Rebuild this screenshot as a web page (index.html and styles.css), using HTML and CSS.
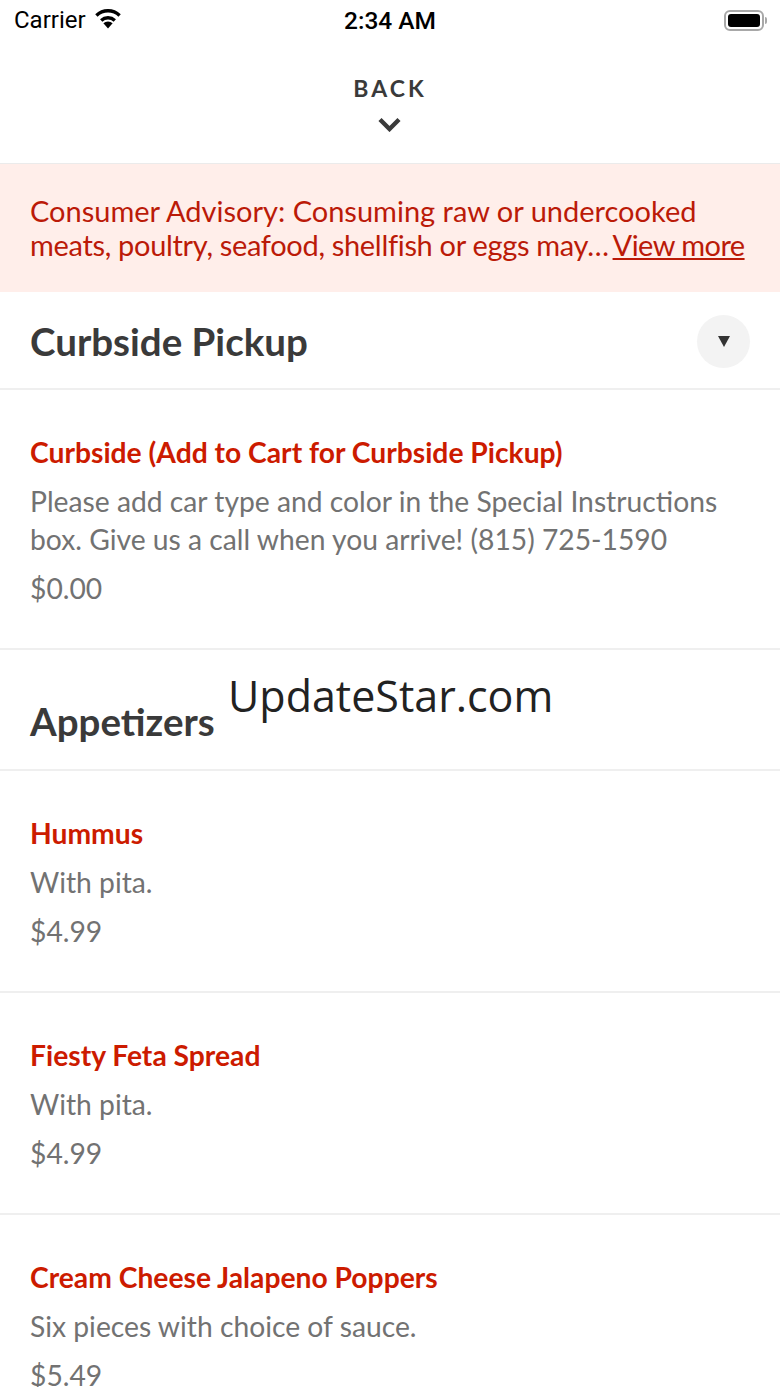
FILE: index.html
```html
<!DOCTYPE html>
<html lang="en">
<head>
  <meta charset="UTF-8">
  <meta name="viewport" content="width=device-width, initial-scale=1.0">
  <title>Menu</title>
  <link rel="stylesheet" href="styles.css">
</head>
<body>
  <div class="status-bar">
    <div class="status-left">
      <span>Carrier</span>
      <svg class="wifi-icon" width="28" height="21" viewBox="0 0 28 21">
        <path d="M14 20.5l-4.6-5.2a6.6 6.6 0 0 1 9.2 0z" fill="#000"/>
        <path d="M7.2 12.4a10 10 0 0 1 13.6 0" fill="none" stroke="#000" stroke-width="3.4"/>
        <path d="M2.4 7.4a16.8 16.8 0 0 1 23.2 0" fill="none" stroke="#000" stroke-width="3.4"/>
      </svg>
    </div>
    <div class="status-time">2:34 AM</div>
    <div class="battery">
      <div class="battery-body"><div class="battery-fill"></div></div>
      <div class="battery-tip"></div>
    </div>
  </div>

  <div class="back-bar">
    <div class="back-text">BACK</div>
    <svg class="back-chevron" width="23" height="15" viewBox="0 0 23 15">
      <path d="M2 2.5L11.5 12L21 2.5" fill="none" stroke="#3a3a3a" stroke-width="4.4"/>
    </svg>
  </div>

  <div class="advisory">
    <div class="advisory-line">Consumer Advisory: Consuming raw or undercooked</div>
    <div class="advisory-line tight">meats, poultry, seafood, shellfish or eggs may…<a href="#" class="advisory-link">View more</a></div>
  </div>

  <div class="section-header first-section">
    <h2>Curbside Pickup</h2>
    <div class="section-toggle"><div class="toggle-arrow"></div></div>
  </div>

  <div class="menu-item">
    <h3>Curbside (Add to Cart for Curbside Pickup)</h3>
    <p>Please add car type and color in the Special Instructions box. Give us a call when you arrive! (815) 725-1590</p>
    <p class="price">$0.00</p>
  </div>

  <div class="section-header">
    <h2>Appetizers</h2>
  </div>

  <div class="menu-item">
    <h3>Hummus</h3>
    <p>With pita.</p>
    <p class="price">$4.99</p>
  </div>

  <div class="menu-item">
    <h3>Fiesty Feta Spread</h3>
    <p>With pita.</p>
    <p class="price">$4.99</p>
  </div>

  <div class="menu-item">
    <h3>Cream Cheese Jalapeno Poppers</h3>
    <p>Six pieces with choice of sauce.</p>
    <p class="price">$5.49</p>
  </div>

  <div class="watermark">UpdateStar.com</div>
</body>
</html>
```

FILE: styles.css
```css
html, body {
  height: 1387px;
  overflow: hidden;
}

body {
  position: relative;
  margin: 0;
  padding: 0;
  background: #fff;
  color: #333;
  font-family: Lato, 'Open Sans', sans-serif;
}

.status-bar {
  display: flex;
  justify-content: space-between;
  align-items: center;
  height: 40px;
  padding: 0 13px 0 14px;
  color: #000;
  font-family: Roboto, 'Liberation Sans', sans-serif;
  font-size: 24px;
  position: relative;
}

.status-left {
  display: flex;
  align-items: center;
  gap: 8px;
}

.wifi-icon {
  margin-top: -4px;
}

.status-time {
  position: absolute;
  left: 0;
  right: 0;
  text-align: center;
  font-weight: 500;
  font-size: 24.5px;
}

.battery {
  display: flex;
  align-items: center;
  gap: 1px;
}

.battery-body {
  width: 40px;
  height: 21px;
  box-sizing: border-box;
  padding: 2px;
  border: 2px solid #a8a8a8;
  border-radius: 6px;
}

.battery-fill {
  height: 100%;
  background: #000;
  border-radius: 3px;
}

.battery-tip {
  width: 2px;
  height: 7px;
  background: #a8a8a8;
  border-radius: 0 2px 2px 0;
}

.back-bar {
  display: flex;
  flex-direction: column;
  align-items: center;
  height: 124px;
  box-sizing: border-box;
  padding-top: 34px;
  border-bottom: 1px solid #ebebeb;
}

.back-text {
  color: #3a3a3a;
  font-size: 23px;
  line-height: 28px;
  font-weight: 700;
  letter-spacing: 3px;
}

.back-chevron {
  margin-top: 15px;
  margin-right: 2px;
}

.advisory {
  height: 128px;
  box-sizing: border-box;
  padding: 30px 30px 0;
  background: #ffeeea;
  color: #bb1a08;
  font-size: 29px;
  line-height: 34px;
}

.advisory-line {
  white-space: nowrap;
}

.advisory-line.tight {
  letter-spacing: -0.32px;
}

.advisory-link {
  color: #bb1a08;
  margin-left: 4px;
  letter-spacing: -0.55px;
}

.section-header {
  display: flex;
  justify-content: space-between;
  align-items: flex-end;
  height: 121px;
  box-sizing: border-box;
  padding: 0 30px 26px;
  border-bottom: 2px solid #efefef;
}

.section-header.first-section {
  align-items: center;
  height: 98px;
  padding: 2px 30px 0;
}

.section-header h2 {
  margin: 0;
  color: #3a3a3a;
  font-size: 38.5px;
  line-height: 44px;
  font-weight: 700;
}

.section-toggle {
  display: flex;
  align-items: center;
  justify-content: center;
  width: 53px;
  height: 53px;
  border-radius: 50%;
  background: #f3f3f3;
}

.toggle-arrow {
  width: 0;
  height: 0;
  border-left: 6.5px solid transparent;
  border-right: 6.5px solid transparent;
  border-top: 11px solid #333;
}

.menu-item {
  box-sizing: border-box;
  padding: 43px 30px 41px;
  border-bottom: 2px solid #efefef;
}

.menu-item h3 {
  margin: 0 0 11px;
  color: #cc1b00;
  font-size: 28.25px;
  line-height: 38px;
  font-weight: 700;
}

.menu-item p {
  margin: 0;
  color: #727272;
  font-size: 28.25px;
  line-height: 38px;
}

.menu-item .price {
  margin-top: 11px;
}

.watermark {
  position: absolute;
  left: 228px;
  top: 666px;
  color: #222;
  font-family: 'Open Sans', sans-serif;
  font-size: 43px;
  line-height: 60px;
  white-space: nowrap;
}
```
